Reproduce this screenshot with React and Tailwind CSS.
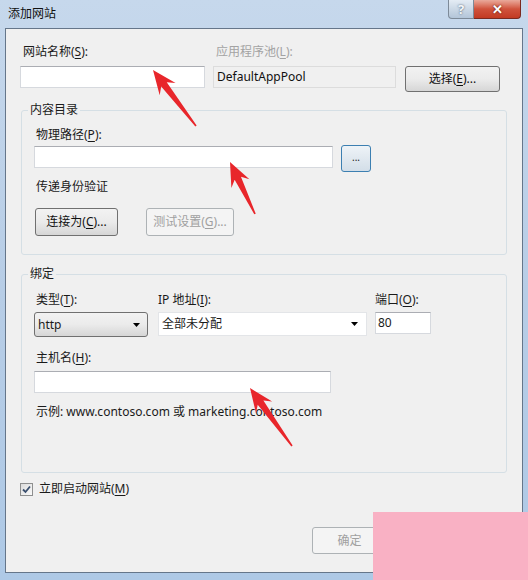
const ARROWS = [
  { tip: [153, 70], tail: [196, 126] },
  { tip: [230, 162], tail: [255, 214] },
  { tip: [250, 388], tail: [292, 446] },
];

function arrowPoints({ tip, tail }) {
  const dx = tip[0] - tail[0];
  const dy = tip[1] - tail[1];
  const len = Math.hypot(dx, dy);
  const ux = dx / len;
  const uy = dy / len;
  const nx = -uy;
  const ny = ux;
  const head = 24;
  const bx = tip[0] - ux * head;
  const by = tip[1] - uy * head;
  const bx2 = tip[0] - ux * (head - 6);
  const by2 = tip[1] - uy * (head - 6);
  const pts = [
    [tail[0] + nx * 0.8, tail[1] + ny * 0.8],
    [bx2 + nx * 3.5, by2 + ny * 3.5],
    [bx + nx * 10, by + ny * 10],
    tip,
    [bx - nx * 10, by - ny * 10],
    [bx2 - nx * 3.5, by2 - ny * 3.5],
    [tail[0] - nx * 0.8, tail[1] - ny * 0.8],
  ];
  return pts.map((p) => p.join(',')).join(' ');
}

const U = ({ children }) => <span className="underline underline-offset-2">{children}</span>;

const inputCls = 'bg-white border border-[#d6d9de] border-t-[#abadb3]';
const btnCls =
  'flex items-center justify-center rounded-[3px] border border-[#707070] bg-gradient-to-b from-[#f2f2f2] via-[#ebebeb] to-[#d6d6d6] text-[#111]';
const btnOff =
  'flex items-center justify-center rounded-[3px] border border-[#adb2b5] bg-[#f4f4f4] text-[#a0a0a0]';

function Caret() {
  return (
    <svg width="7" height="4" viewBox="0 0 7 4">
      <path d="M0 0H7L3.5 4Z" fill="#000" />
    </svg>
  );
}

function GroupBox({ title, className, children }) {
  return (
    <div className={`relative rounded-[3px] border border-[#d5dfe5] mx-[15px] ${className}`}>
      <span className="absolute -top-[9px] left-[6px] bg-[#f0f0f0] px-[2px] leading-[16px]">{title}</span>
      {children}
    </div>
  );
}

export default function App() {
  return (
    <div className="relative w-[528px] h-[580px] overflow-hidden bg-gradient-to-b from-[#c6d8ec] via-[#b7cde6] to-[#aec9e6] font-['Noto_Sans','Noto_Sans_CJK_SC',sans-serif] text-[12px] text-[#1a1a1a]">
      {/* title bar */}
      <div className="h-[28px] flex justify-between pl-[8px] pr-[7px]">
        <span className="mt-[6px] leading-[16px] text-[#111]">添加网站</span>
        <div className="flex h-[19px]">
          <div className="w-[26px] flex items-center justify-center rounded-bl-[4px] border border-t-0 border-[#7d8a98] bg-gradient-to-b from-[#e4ecf4] to-[#b3c5d8] text-[#f4f7fa] font-bold text-[13px] leading-none [text-shadow:0_0_2px_#3b4b5c]">
            ?
          </div>
          <div className="w-[47px] flex items-center justify-center rounded-br-[4px] border border-t-0 border-l-0 border-[#7a2a20] bg-gradient-to-b from-[#e9a99b] via-[#d0523c] to-[#c23a22] text-white font-bold text-[13px] leading-none [text-shadow:0_0_2px_#4a0c04]">
            ✕
          </div>
        </div>
      </div>

      {/* client area */}
      <div className="mx-[5px] h-[545px] border border-[#65768a] bg-[#f0f0f0]">
        {/* row 1 */}
        <div className="flex items-start pl-[14px] pt-[15px]">
          <div className="flex flex-col w-[185px]">
            <span className="pl-[3px] leading-[16px] h-[16px]">
              网站名称(<U>S</U>):
            </span>
            <div className={`mt-[6px] h-[22px] ${inputCls}`} />
          </div>
          <div className="flex flex-col w-[183px] ml-[8px]">
            <span className="pl-[3px] leading-[16px] h-[16px] text-[#a3a3a3]">
              应用程序池(<U>L</U>):
            </span>
            <div className="mt-[6px] h-[22px] border border-[#dcdcdc] bg-[#f0f0f0] pl-[3px] leading-[20px] text-[#111]">
              DefaultAppPool
            </div>
          </div>
          <div className={`ml-[9px] mt-[22px] w-[95px] h-[26px] ${btnCls}`}>
            选择(<U>E</U>)...
          </div>
        </div>

        {/* 内容目录 */}
        <GroupBox title="内容目录" className="mt-[18px] h-[145px] pl-[12px] pt-[16px]">
          <div className="pl-[2px] leading-[16px] h-[16px]">
            物理路径(<U>P</U>):
          </div>
          <div className="flex items-start mt-[2px]">
            <div className={`mt-[1px] w-[299px] h-[22px] ${inputCls}`} />
            <div className="ml-[8px] w-[30px] h-[27px] flex items-center justify-center rounded-[3px] border border-[#3c7fb1] bg-gradient-to-b from-[#eef3f7] to-[#d3dee8] text-[10px] leading-none pb-[3px]">
              ...
            </div>
          </div>
          <div className="mt-[7px] pl-[2px] leading-[16px] h-[16px]">传递身份验证</div>
          <div className="flex mt-[13px]">
            <div className={`ml-[1px] w-[83px] h-[28px] ${btnCls}`}>
              连接为(<U>C</U>)...
            </div>
            <div className={`ml-[28px] w-[88px] h-[28px] ${btnOff}`}>
              测试设置(<U>G</U>)...
            </div>
          </div>
        </GroupBox>

        {/* 绑定 */}
        <GroupBox title="绑定" className="mt-[19px] h-[199px] pl-[12px] pt-[17px]">
          <div className="flex items-start">
            <div className="flex flex-col w-[114px]">
              <span className="pl-[2px] leading-[16px] h-[16px]">
                类型(<U>T</U>):
              </span>
              <div className="mt-[4px] h-[25px] flex items-center justify-between pl-[3px] pr-[7px] rounded-[3px] border border-[#707070] bg-gradient-to-b from-[#f2f2f2] via-[#ebebeb] to-[#d6d6d6]">
                <span>http</span>
                <Caret />
              </div>
            </div>
            <div className="flex flex-col w-[209px] ml-[10px]">
              <span className="leading-[16px] h-[16px]">
                IP 地址(<U>I</U>):
              </span>
              <div className="mt-[4px] h-[24px] flex items-center justify-between pl-[3px] pr-[8px] border border-[#e3e5e8] bg-white">
                <span>全部未分配</span>
                <Caret />
              </div>
            </div>
            <div className="flex flex-col w-[56px] ml-[8px]">
              <span className="leading-[16px] h-[16px]">
                端口(<U>O</U>):
              </span>
              <div className={`mt-[4px] h-[22px] pl-[2px] leading-[20px] ${inputCls}`}>80</div>
            </div>
          </div>
          <div className="mt-[13px] pl-[2px] leading-[16px] h-[16px]">
            主机名(<U>H</U>):
          </div>
          <div className={`mt-[5px] w-[297px] h-[22px] ${inputCls}`} />
          <div className="mt-[11px] pl-[2px] leading-[16px] h-[16px]">
            示例: www.contoso.com 或 marketing.contoso.com
          </div>
        </GroupBox>

        {/* checkbox */}
        <div className="flex items-center mt-[8px] pl-[14px] h-[16px]">
          <div className="w-[13px] h-[13px] border border-[#8e8f8f] bg-gradient-to-br from-[#dcdcdc] to-[#fafafa] flex items-center justify-center">
            <svg width="9" height="9" viewBox="0 0 9 9">
              <path d="M1 4.5L3.5 7L8 1.5" stroke="#3a4f6e" strokeWidth="1.8" fill="none" />
            </svg>
          </div>
          <span className="ml-[6px] leading-[16px]">
            立即启动网站(<U>M</U>)
          </span>
        </div>

        {/* footer buttons */}
        <div className="flex mt-[30px] pl-[306px]">
          <div className={`w-[75px] h-[27px] ${btnOff}`}>确定</div>
          <div className={`ml-[8px] w-[75px] h-[27px] ${btnCls}`}>取消</div>
        </div>
      </div>

      {/* pink cover block */}
      <div className="absolute left-[373px] top-[512px] w-[155px] h-[68px] bg-[#f9b1c4]" />

      {/* red annotation arrows */}
      <svg className="absolute inset-0 pointer-events-none" width="528" height="580">
        {ARROWS.map((a, i) => (
          <polygon key={i} points={arrowPoints(a)} fill="#e8262b" />
        ))}
      </svg>
    </div>
  );
}
